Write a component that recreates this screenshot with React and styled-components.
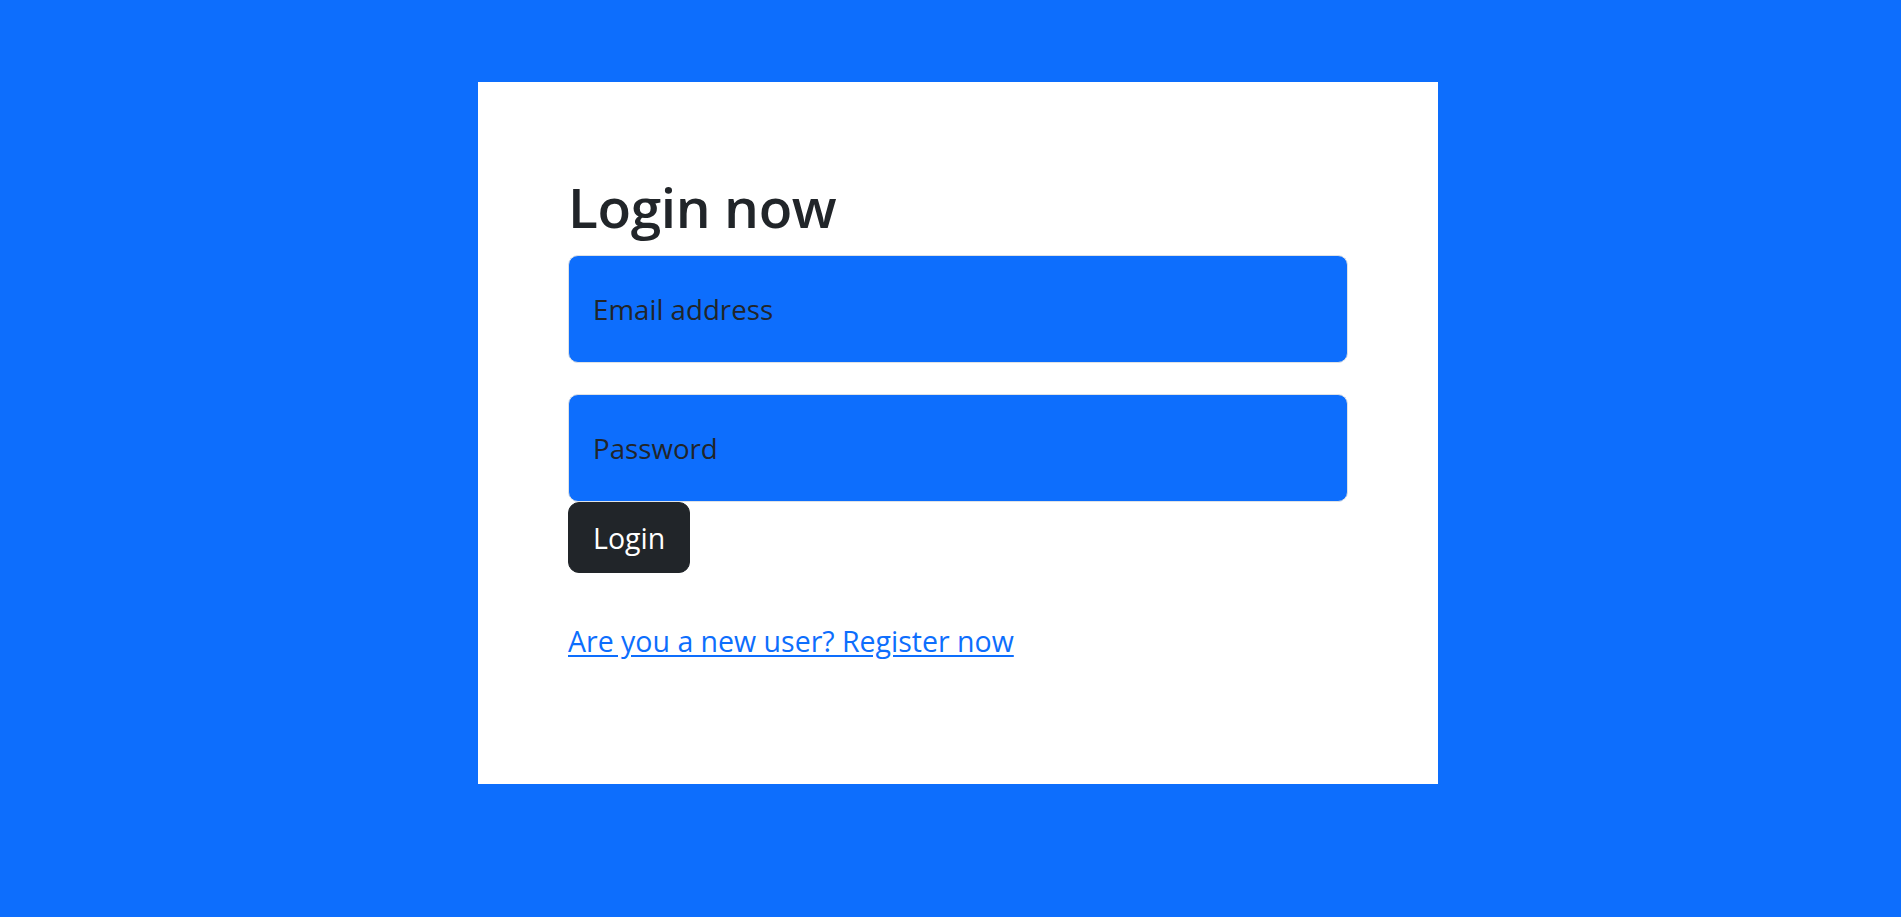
import React from "react";
import styled, { createGlobalStyle } from "styled-components";

const GlobalStyle = createGlobalStyle`
  html, body {
    margin: 0;
    background: #0d6efd;
    font-family: "Open Sans", "Noto Sans", sans-serif;
    color: #212529;
  }
`;

const Page = styled.div`
  display: flex;
  justify-content: center;
  padding: 82px 0 0 15px;
`;

const Card = styled.div`
  box-sizing: border-box;
  width: 960px;
  height: 702px;
  background: #fff;
  padding: 90px 90px 0;
  display: flex;
  flex-direction: column;
  align-items: flex-start;
`;

const Title = styled.h1`
  margin: 0 0 13px;
  font-size: 55px;
  font-weight: 600;
  line-height: 70px;
  letter-spacing: -0.4px;
`;

const Field = styled.input`
  box-sizing: border-box;
  width: 100%;
  height: 108px;
  margin-bottom: ${(p) => (p.$last ? "0" : "31px")};
  padding: 0 24px;
  background: #0d6efd;
  border: 1.5px solid #dee2e6;
  border-radius: 10px;
  font-family: inherit;
  font-size: 27.7px;
  color: #212529;
  outline: none;

  &::placeholder {
    color: #212529;
    opacity: 1;
  }
`;

const Button = styled.button`
  box-sizing: border-box;
  height: 71px;
  padding: 0 24px;
  background: #212529;
  border: 1.5px solid #212529;
  border-radius: 11px;
  color: #fff;
  font-family: inherit;
  font-size: 28.5px;
  cursor: pointer;
`;

const RegisterLink = styled.a`
  margin-top: 47px;
  font-size: 28.5px;
  line-height: 42px;
  color: #0d6efd;
  text-decoration: underline;
  text-underline-offset: 3px;
`;

export default function App() {
  return (
    <>
      <GlobalStyle />
      <Page>
        <Card>
          <Title>Login now</Title>
          <Field type="email" placeholder="Email address" />
          <Field $last type="password" placeholder="Password" />
          <Button>Login</Button>
          <RegisterLink href="#">Are you a new user? Register now</RegisterLink>
        </Card>
      </Page>
    </>
  );
}
